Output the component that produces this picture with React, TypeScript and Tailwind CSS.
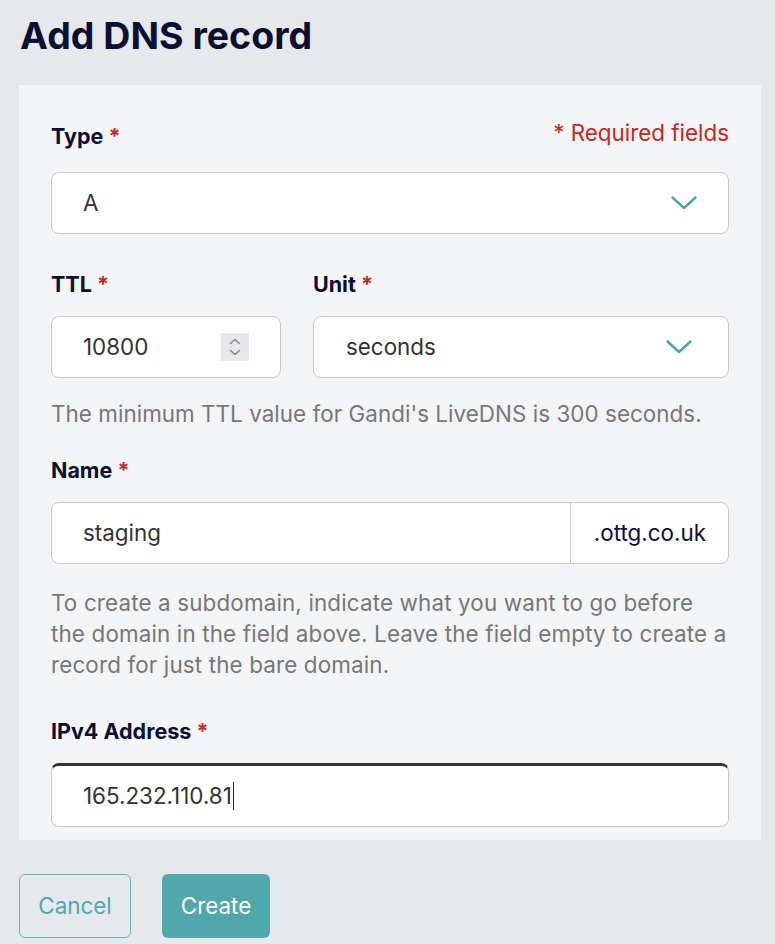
import React from "react";

function Chevron() {
  return (
    <svg width="26" height="14" viewBox="0 0 26 14" fill="none">
      <path d="M1.5 1.5 L13 12 L24.5 1.5" stroke="#4aa6a8" strokeWidth="2.4" strokeLinecap="round" strokeLinejoin="round" />
    </svg>
  );
}

function Label({ children }: { children: React.ReactNode }) {
  return (
    <div className="text-[21.5px] leading-[28px] font-bold text-[#0b1033]">
      {children} <span className="text-[#c4271e]">*</span>
    </div>
  );
}

export default function App() {
  return (
    <div className="min-h-screen w-full bg-[#e6e9ec] font-['Inter',sans-serif] pb-[6px]">
      <div className="h-[85px] pl-[20px] pt-[14px]">
        <h1 className="text-[37.5px] leading-[44px] font-bold text-[#0b1033]">Add DNS record</h1>
      </div>
      <div className="ml-[19px] w-[742px] bg-[#f3f4f6] px-[32px] pt-[37px] pb-[13px]">
        <div className="flex justify-between items-start h-[28px]">
          <Label>Type</Label>
          <div className="text-[22.4px] leading-[22px] text-[#c4271e]">* Required fields</div>
        </div>
        <div className="mt-[22px] h-[62px] bg-white border border-[#c8c9cf] rounded-[8px] flex items-center justify-between pl-[31px] pr-[31px] text-[22.4px] text-[#333333]">
          <span>A</span>
          <Chevron />
        </div>

        <div className="mt-[36px] flex gap-[32px]">
          <div className="w-[230px]">
            <Label>TTL</Label>
            <div className="mt-[18px] h-[62px] bg-white border border-[#c8c9cf] rounded-[8px] flex items-center justify-between pl-[31px] pr-[31px] text-[22.4px] text-[#333333]">
              <span>10800</span>
              <div className="w-[28px] h-[28px] bg-[#e8e8ec] flex flex-col items-center justify-center gap-[4px]">
                <svg width="12" height="7" viewBox="0 0 12 7" fill="none">
                  <path d="M1.5 5.5 L6 1.5 L10.5 5.5" stroke="#8a8a8f" strokeWidth="1.6" strokeLinecap="round" strokeLinejoin="round" />
                </svg>
                <svg width="12" height="7" viewBox="0 0 12 7" fill="none">
                  <path d="M1.5 1.5 L6 5.5 L10.5 1.5" stroke="#8a8a8f" strokeWidth="1.6" strokeLinecap="round" strokeLinejoin="round" />
                </svg>
              </div>
            </div>
          </div>
          <div className="flex-1">
            <Label>Unit</Label>
            <div className="mt-[18px] h-[62px] bg-white border border-[#c8c9cf] rounded-[8px] flex items-center justify-between pl-[32px] pr-[36px] text-[22.4px] text-[#333333]">
              <span>seconds</span>
              <Chevron />
            </div>
          </div>
        </div>
        <p className="mt-[20px] text-[22.4px] leading-[31px] text-[#777777] whitespace-nowrap tracking-[0.05px]">
          The minimum TTL value for Gandi's LiveDNS is 300 seconds.
        </p>

        <div className="mt-[27px]">
          <Label>Name</Label>
        </div>
        <div className="mt-[18px] h-[62px] bg-white border border-[#c8c9cf] rounded-[8px] flex text-[22.4px]">
          <div className="flex-1 flex items-center pl-[31px] text-[#333333]">staging</div>
          <div className="flex items-center border-l border-[#c8c9cf] pl-[23px] pr-[22px] text-[#0b1033]">.ottg.co.uk</div>
        </div>
        <p className="mt-[23px] text-[22.4px] leading-[31px] text-[#777777] whitespace-nowrap tracking-[0.15px]">
          To create a subdomain, indicate what you want to go before
          <br />
          the domain in the field above. Leave the field empty to create a
          <br />
          record for just the bare domain.
        </p>

        <div className="mt-[37px]">
          <Label>IPv4 Address</Label>
        </div>
        <div className="mt-[18px] h-[64px] bg-white border border-[#c8c9cf] border-t-[3px] border-t-[#333333] rounded-[8px] flex items-center pl-[31px] text-[22.4px] text-[#333333]">
          <span>165.232.110.81</span>
          <span className="ml-[1px] w-[1.5px] h-[28px] bg-[#222222]" />
        </div>
      </div>

      <div className="mt-[34px] ml-[19px] flex gap-[31px]">
        <button className="h-[64px] w-[112px] rounded-[6px] border border-[#63b5b6] text-[#4fa8aa] text-[22.4px] flex items-center justify-center">
          Cancel
        </button>
        <button className="h-[64px] w-[108px] rounded-[6px] bg-[#50a8aa] text-white text-[22.4px] flex items-center justify-center">
          Create
        </button>
      </div>
    </div>
  );
}
